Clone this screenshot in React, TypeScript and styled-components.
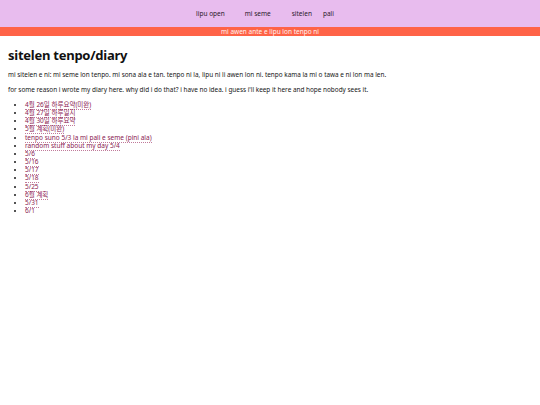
import React from "react";
import styled, { createGlobalStyle } from "styled-components";

const Global = createGlobalStyle`
  html, body { margin: 0; padding: 0; background: #ffffff; }
  body { font-family: "Noto Sans", "Noto Sans CJK KR", sans-serif; color: #1a1a1a; }
`;

const Header = styled.header`
  background: #e8bcee;
  height: 27px;
  display: flex;
  justify-content: center;
  align-items: center;
  padding-right: 10px;
`;

const Nav = styled.nav`
  display: flex;
  align-items: center;
  font-size: 6.5px;
  color: #2a1a2a;
`;

const NavItem = styled.a<{ $gap: number }>`
  margin-left: ${(p) => p.$gap}px;
  color: inherit;
  text-decoration: none;
  &:first-child { margin-left: 0; }
`;

const Banner = styled.div`
  background: #ff6347;
  color: #fff3ee;
  font-size: 6.5px;
  height: 9px;
  line-height: 9px;
  text-align: center;
`;

const Main = styled.main`
  padding: 0 8px;
`;

const Title = styled.h1`
  font-size: 13px;
  letter-spacing: -0.25px;
  font-weight: 700;
  margin: 10px 0 7px;
  color: #111;
`;

const Para = styled.p`
  font-size: 6.4px;
  margin: 0 0 7px;
  line-height: 8px;
  color: #161616;
`;

const List = styled.ul`
  margin: 6px 0 0;
  padding-left: 17px;
  font-size: 6.5px;
  line-height: 8.15px;
`;

const Item = styled.li``;

const Link = styled.a`
  color: #8b2252;
  text-decoration: none;
  border-bottom: 1px dotted #c07a9a;
`;

const navItems: [string, number][] = [
  ["lipu open", 0],
  ["mi seme", 20],
  ["sitelen", 21],
  ["pali", 11],
];

const entries = [
  "4월 26일 하루요약(미완)",
  "4월 27일 하루일지",
  "4월 30일 하루요약",
  "5월 계획(미완)",
  "tenpo suno 5/3 la mi pali e seme (pini ala)",
  "random stuff about my day 5/4",
  "5/6",
  "5/16",
  "5/17",
  "5/18",
  "5/25",
  "6월 계획",
  "5/31",
  "6/1",
];

export default function App() {
  return (
    <>
      <Global />
      <Header>
        <Nav>
          {navItems.map(([t, g]) => (
            <NavItem key={t} $gap={g} href="#">
              {t}
            </NavItem>
          ))}
        </Nav>
      </Header>
      <Banner>mi awen ante e lipu lon tenpo ni</Banner>
      <Main>
        <Title>sitelen tenpo/diary</Title>
        <Para>
          mi sitelen e ni: mi seme lon tenpo. mi sona ala e tan. tenpo ni la, lipu ni li awen lon ni. tenpo kama la mi o tawa e ni lon ma len.
        </Para>
        <Para>
          for some reason i wrote my diary here. why did i do that? i have no idea. i guess i'll keep it here and hope nobody sees it.
        </Para>
        <List>
          {entries.map((e) => (
            <Item key={e}>
              <Link href="#">{e}</Link>
            </Item>
          ))}
        </List>
      </Main>
    </>
  );
}
